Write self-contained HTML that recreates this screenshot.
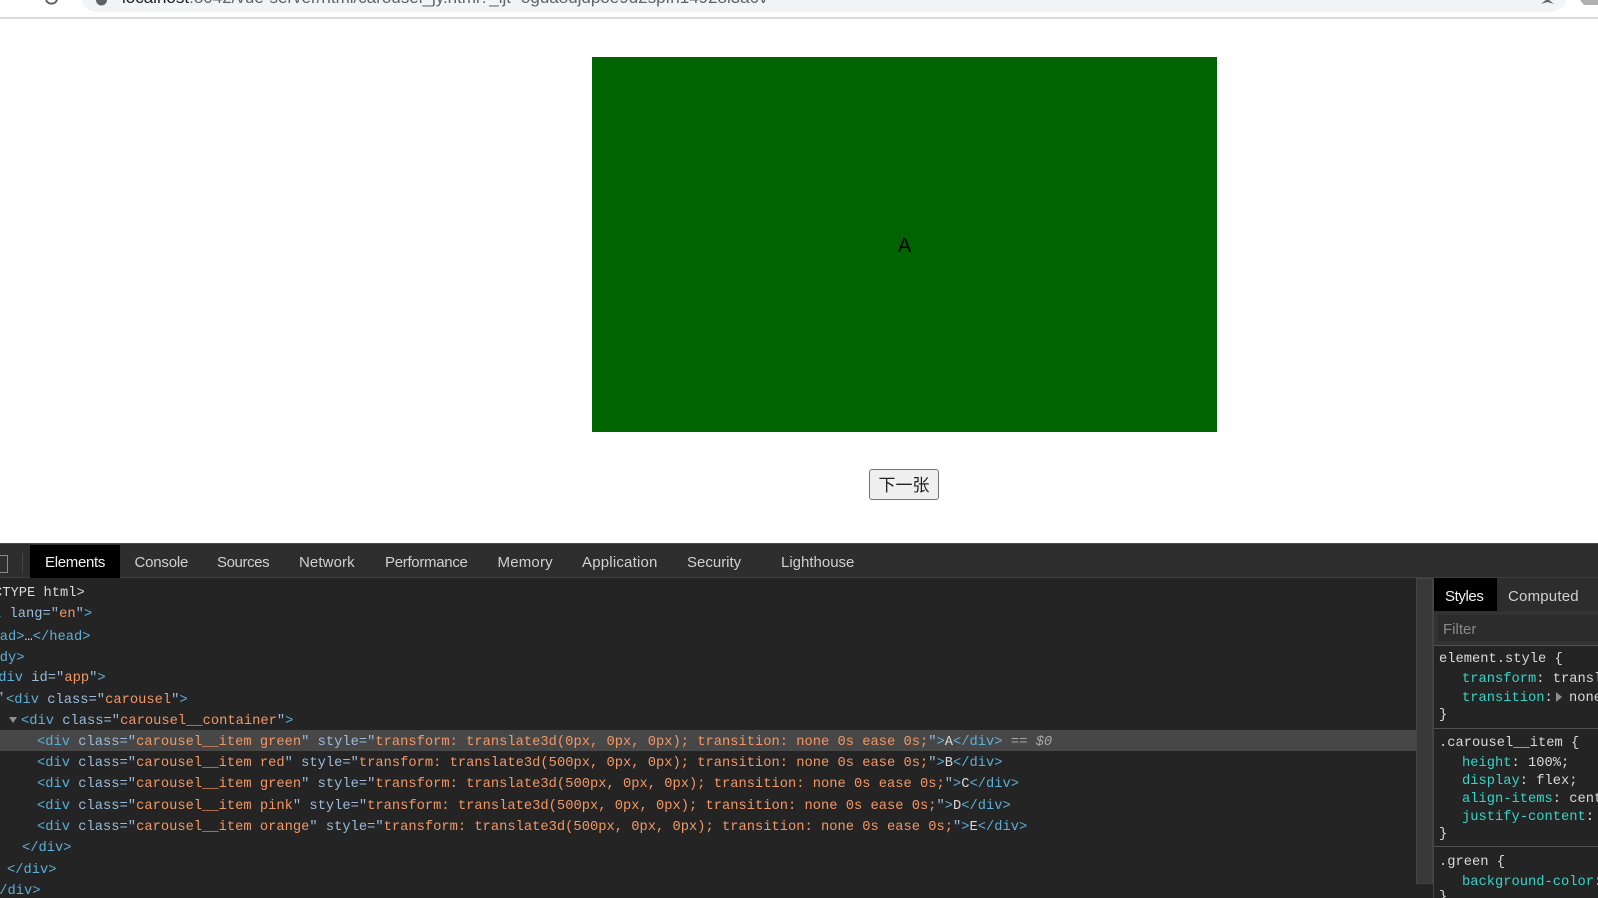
<!DOCTYPE html>
<html lang="en">
<head>
<meta charset="utf-8">
<title>Carousel DevTools</title>
<style>
html,body{margin:0;padding:0;width:1598px;height:898px;overflow:hidden;background:#fff}
body{position:relative;font-family:"Liberation Sans","Noto Sans CJK SC",sans-serif}
div{box-sizing:border-box}
.abs{position:absolute}
#addr{position:absolute;left:81px;top:-20px;width:1486px;height:32px;background:repeating-conic-gradient(#eceef0 0 25%,#f8f9f9 0 50%) 0 0/2px 2px;border-radius:16px;overflow:hidden}
#url{position:absolute;left:41px;top:8px;font-size:17px;line-height:20px;color:#5f6368;white-space:pre}
#url b{font-weight:400;color:#202124}
#line{position:absolute;left:0;top:17px;width:1598px;height:2px;background:#dadce0}
#slide{position:absolute;left:592px;top:57px;width:625px;height:375px;background:#006400;display:flex;align-items:center;justify-content:center;padding-top:4px;font-size:20px;color:#000}
#btn{position:absolute;left:869px;top:469px;width:70px;height:31px;background:#efefef;border:1px solid #767676;border-radius:3px;font-size:17px;line-height:27px;text-align:center;color:#222;font-family:"WenQuanYi Zen Hei","Noto Sans CJK SC",sans-serif}
#dt{position:absolute;left:0;top:543px;width:1598px;height:355px;background:#242424;overflow:hidden}
#tabs{position:absolute;left:0;top:0;width:1598px;height:35px;background:repeating-conic-gradient(#272727 0 25%,#343434 0 50%) 0 0/2px 2px;border-top:1px solid #4a4c50;border-bottom:1px solid #3d3d3d}
.t{position:absolute;top:554px;font-size:15px;line-height:18px;color:#d0d0d0;white-space:pre}
.m{position:absolute;font-family:"Liberation Mono",monospace;font-size:13.75px;line-height:21px;white-space:pre;color:#d5d5d5}
.g{color:#5db0d7}.n{color:#9bbbdc}.v{color:#f29766}.w{color:#d9d9d9}.p{color:#35d4c7}.f{color:#d9d9d9}
.h{position:absolute;background:#474747}
</style>
</head>
<body>
<div id="addr"><div id="url"><b>localhost</b>:8042/vue-server/html/carousel_jy.html?_ijt=ogua8ujdpoe9d2spfn14928l3a0v</div></div>
<svg class="abs" style="left:0;top:0" width="120" height="8" viewBox="0 0 120 8"><path d="M46 0a6 6 0 0 0 11 0" fill="none" stroke="#5f6368" stroke-width="2"/><path d="M96 0a5.500 5.500 0 0 0 11 0z" fill="#5f6368"/></svg>
<svg class="abs" style="left:1535px;top:0" width="63" height="8" viewBox="0 0 63 8"><path d="M6 4l5-4h3l5 4-3-1-3.500-1-3.500 1z" fill="#5f6368"/><path d="M45 0h18v5h-14z" fill="#b0b0b0"/></svg>
<div id="line"></div>
<div id="slide">A</div>
<div id="btn">下一张</div>

<div id="dt">
  <div id="tabs"></div>
  <div class="abs" style="left:0;top:12px;width:8px;height:18px;border:1px solid #8a8a8a;border-left:none"></div>
  <div class="abs" style="left:22px;top:10px;width:1px;height:20px;background:#444"></div>
  <div class="abs" style="left:30px;top:2px;width:90px;height:33px;background:#000"></div>
  <div class="h" style="left:0;top:187px;width:1416px;height:21px"></div>
  <div class="abs" style="left:1416px;top:35px;width:17px;height:320px;background:#242424"></div>
  <div class="abs" style="left:1416px;top:35px;width:17px;height:306px;background:#383838;border:1px solid #444"></div>
  <div class="abs" style="left:1433px;top:35px;width:165px;height:320px;background:#242424;border-left:1px solid #454545"></div>
  <div class="abs" style="left:1434px;top:35px;width:164px;height:33px;background:#2d2d2d"></div>
  <div class="abs" style="left:1434px;top:35px;width:63px;height:33px;background:#000"></div>
  <div class="abs" style="left:1434px;top:68px;width:164px;height:34px;background:#333"></div>
  <div class="abs" style="left:1438px;top:72px;width:160px;height:26px;background:#2b2b2b"></div>
  <div class="abs" style="left:1434px;top:102px;width:164px;height:1px;background:#505050"></div>
  <div class="abs" style="left:1434px;top:185px;width:164px;height:1px;background:#505050"></div>
  <div class="abs" style="left:1434px;top:303px;width:164px;height:1px;background:#505050"></div>
</div>

<div class="t" style="left:45px;color:#f2f2f2;letter-spacing:-.3px">Elements</div>
<div class="t" style="left:134.500px;letter-spacing:-.2px">Console</div>
<div class="t" style="left:217px;letter-spacing:-.4px">Sources</div>
<div class="t" style="left:299px;letter-spacing:.1px">Network</div>
<div class="t" style="left:385px;letter-spacing:-.3px">Performance</div>
<div class="t" style="left:497.500px;letter-spacing:.2px">Memory</div>
<div class="t" style="left:582px;letter-spacing:.2px">Application</div>
<div class="t" style="left:687px">Security</div>
<div class="t" style="left:781px">Lighthouse</div>
<div class="t" style="left:1445px;top:588px;color:#f2f2f2;letter-spacing:-.4px">Styles</div>
<div class="t" style="left:1508px;top:588px;letter-spacing:.2px">Computed</div>
<div class="t" style="left:1443px;top:621px;color:#8a8a8a">Filter</div>

<div class="m w" style="left:-39px;top:583px">&lt;!DOCTYPE html&gt;</div>
<div class="m" style="left:-40px;top:604px"><span class="g">&lt;html</span> <span class="n">lang</span><span class="n">="</span><span class="v">en</span><span class="n">"</span><span class="g">&gt;</span></div>
<div class="m" style="left:-25px;top:627px"><span class="g">&lt;head&gt;</span><span class="w">…</span><span class="g">&lt;/head&gt;</span></div>
<div class="m g" style="left:-25px;top:648px">&lt;body&gt;</div>
<div class="m" style="left:-10px;top:668px"><span class="g">&lt;div</span> <span class="n">id</span><span class="n">="</span><span class="v">app</span><span class="n">"</span><span class="g">&gt;</span></div>
<div class="m" style="left:6px;top:690px"><span class="g">&lt;div</span> <span class="n">class</span><span class="n">="</span><span class="v">carousel</span><span class="n">"</span><span class="g">&gt;</span></div>
<div class="m" style="left:21px;top:711px"><span class="g">&lt;div</span> <span class="n">class</span><span class="n">="</span><span class="v">carousel__container</span><span class="n">"</span><span class="g">&gt;</span></div>
<svg class="abs" style="left:0;top:692px" width="20" height="36" viewBox="0 0 20 36"><path d="M0 0h3l-1.500 5z" fill="#8e8e8e"/><path d="M9 25h8l-4 6z" fill="#8e8e8e"/></svg>

<div class="m" style="left:37px;top:732px"><span class="g">&lt;div</span> <span class="n">class</span><span class="n">="</span><span class="v">carousel__item green</span><span class="n">"</span> <span class="n">style</span><span class="n">="</span><span class="v">transform: translate3d(0px, 0px, 0px); transition: none 0s ease 0s;</span><span class="n">"</span><span class="g">&gt;</span><span class="w">A</span><span class="g">&lt;/div&gt;</span><span style="color:#a8a8a8"> == <i>$0</i></span></div>
<div class="m" style="left:37px;top:753px"><span class="g">&lt;div</span> <span class="n">class</span><span class="n">="</span><span class="v">carousel__item red</span><span class="n">"</span> <span class="n">style</span><span class="n">="</span><span class="v">transform: translate3d(500px, 0px, 0px); transition: none 0s ease 0s;</span><span class="n">"</span><span class="g">&gt;</span><span class="w">B</span><span class="g">&lt;/div&gt;</span></div>
<div class="m" style="left:37px;top:774px"><span class="g">&lt;div</span> <span class="n">class</span><span class="n">="</span><span class="v">carousel__item green</span><span class="n">"</span> <span class="n">style</span><span class="n">="</span><span class="v">transform: translate3d(500px, 0px, 0px); transition: none 0s ease 0s;</span><span class="n">"</span><span class="g">&gt;</span><span class="w">C</span><span class="g">&lt;/div&gt;</span></div>
<div class="m" style="left:37px;top:796px"><span class="g">&lt;div</span> <span class="n">class</span><span class="n">="</span><span class="v">carousel__item pink</span><span class="n">"</span> <span class="n">style</span><span class="n">="</span><span class="v">transform: translate3d(500px, 0px, 0px); transition: none 0s ease 0s;</span><span class="n">"</span><span class="g">&gt;</span><span class="w">D</span><span class="g">&lt;/div&gt;</span></div>
<div class="m" style="left:37px;top:817px"><span class="g">&lt;div</span> <span class="n">class</span><span class="n">="</span><span class="v">carousel__item orange</span><span class="n">"</span> <span class="n">style</span><span class="n">="</span><span class="v">transform: translate3d(500px, 0px, 0px); transition: none 0s ease 0s;</span><span class="n">"</span><span class="g">&gt;</span><span class="w">E</span><span class="g">&lt;/div&gt;</span></div>
<div class="m g" style="left:22px;top:838px">&lt;/div&gt;</div>
<div class="m g" style="left:7px;top:860px">&lt;/div&gt;</div>
<div class="m g" style="left:-9px;top:881px">&lt;/div&gt;</div>

<div class="abs" style="left:1434px;top:640px;width:164px;height:258px;overflow:hidden">
  <div class="m f" style="left:5px;top:9px">element.style {</div>
  <div class="m" style="left:28px;top:29px"><span class="p">transform</span><span class="f">: transl</span></div>
  <div class="m" style="left:28px;top:48px"><span class="p">transition</span><span class="f">:</span></div>
  <svg class="abs" style="left:121px;top:51px" width="8" height="12" viewBox="0 0 8 12"><path d="M1 1l6 5-6 5z" fill="#8e8e8e"/></svg>
  <div class="m f" style="left:135px;top:48px">none</div>
  <div class="m f" style="left:5px;top:65px">}</div>
  <div class="m f" style="left:5px;top:93px">.carousel__item {</div>
  <div class="m" style="left:28px;top:113px"><span class="p">height</span><span class="f">: 100%;</span></div>
  <div class="m" style="left:28px;top:131px"><span class="p">display</span><span class="f">: flex;</span></div>
  <div class="m" style="left:28px;top:149px"><span class="p">align-items</span><span class="f">: center;</span></div>
  <div class="m" style="left:28px;top:167px"><span class="p">justify-content</span><span class="f">: center;</span></div>
  <div class="m f" style="left:5px;top:184px">}</div>
  <div class="m f" style="left:5px;top:212px">.green {</div>
  <div class="m" style="left:28px;top:232px"><span class="p">background-color</span><span class="f">: darkgreen;</span></div>
  <div class="m f" style="left:5px;top:247px">}</div>
</div>
</body>
</html>
